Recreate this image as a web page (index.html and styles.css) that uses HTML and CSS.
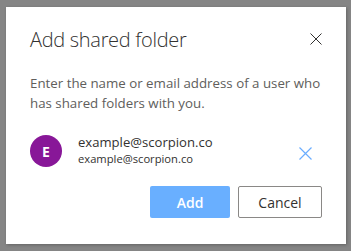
FILE: index.html
```html
<!DOCTYPE html>
<html>
<head>
<meta charset="utf-8">
<link rel="stylesheet" href="styles.css">
</head>
<body>
<div class="dialog">
  <div class="header">
    <h1 class="title">Add shared folder</h1>
    <button class="close" aria-label="Close">
      <svg width="12" height="12" viewBox="0 0 12 12"><path d="M0.5 0.5L11.5 11.5M11.5 0.5L0.5 11.5" stroke="#323130" stroke-width="1" fill="none"/></svg>
    </button>
  </div>
  <p class="desc">Enter the name or email address of a user who has shared folders with you.</p>
  <div class="person">
    <div class="avatar">E</div>
    <div class="info">
      <div class="name">example@scorpion.co</div>
      <div class="email">example@scorpion.co</div>
    </div>
    <button class="remove" aria-label="Remove">
      <svg width="13" height="13" viewBox="0 0 13 13"><path d="M0.5 0.5L12.5 12.5M12.5 0.5L0.5 12.5" stroke="#6aadff" stroke-width="1.2" fill="none"/></svg>
    </button>
  </div>
  <div class="actions">
    <button class="btn primary">Add</button>
    <button class="btn secondary">Cancel</button>
  </div>
</div>
</body>
</html>
```
FILE: styles.css
```css
html, body {
  margin: 0;
  padding: 0;
  background: #858585;
  width: 351px;
  height: 251px;
  overflow: hidden;
}
body {
  padding: 7px 5px 7px 6px;
  box-sizing: border-box;
  font-family: "Open Sans", "Noto Sans", sans-serif;
}
.dialog {
  background: #fff;
  width: 340px;
  height: 237px;
  box-sizing: border-box;
  padding: 16px 24px 0 24px;
  box-shadow: 1px 1px 3px rgba(0,0,0,0.25);
}
.header {
  display: flex;
  align-items: center;
  justify-content: space-between;
  height: 32px;
}
.title {
  margin: 0;
  font-size: 20px;
  font-weight: 300;
  color: #323130;
  letter-spacing: -0.3px;
}
.close {
  border: 0;
  background: none;
  padding: 0;
  display: flex;
}
.desc {
  margin: 18px 0 0 0;
  font-size: 13.3px;
  line-height: 20px;
  color: #605e5c;
}
.person {
  display: flex;
  align-items: center;
  margin-top: 22px;
}
.avatar {
  width: 32px;
  height: 32px;
  border-radius: 50%;
  background: #881798;
  color: #fff;
  font-size: 14px;
  font-weight: 700;
  display: flex;
  align-items: center;
  justify-content: center;
  flex: none;
}
.info {
  margin-left: 16px;
  flex: 1;
  margin-top: -3px;
}
.name {
  font-size: 13.1px;
  line-height: 18px;
  color: #323130;
}
.email {
  font-size: 11.2px;
  line-height: 16px;
  color: #323130;
}
.remove {
  border: 0;
  background: none;
  padding: 0;
  margin-right: 10px;
  display: flex;
  margin-top: 4px;
}
.actions {
  display: flex;
  justify-content: flex-end;
  gap: 8px;
  margin-top: 19px;
}
.btn {
  height: 32px;
  font-family: inherit;
  font-size: 14px;
  font-weight: 600;
  border-radius: 2px;
  box-sizing: border-box;
}
.primary {
  width: 80px;
  background: #69afff;
  border: 0;
  color: #fff;
}
.secondary {
  width: 84px;
  background: #fff;
  border: 1px solid #8a8886;
  color: #323130;
  font-weight: 400;
}
```
